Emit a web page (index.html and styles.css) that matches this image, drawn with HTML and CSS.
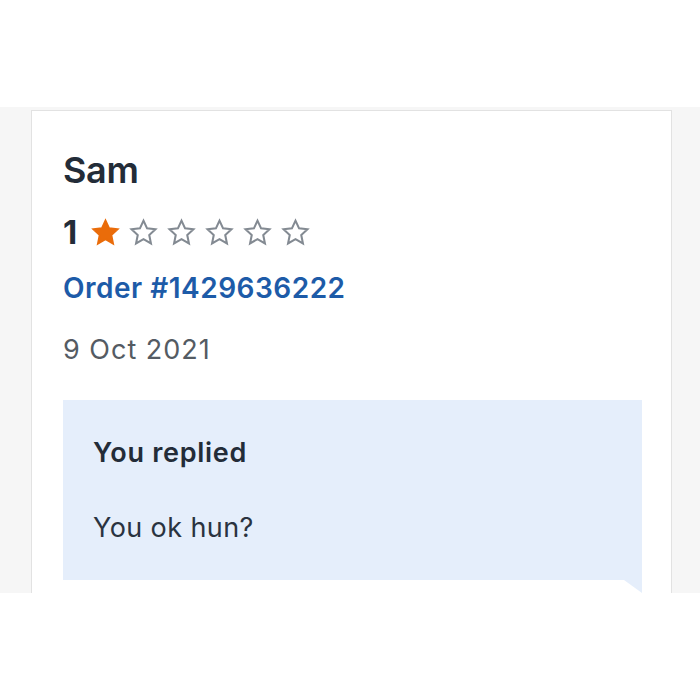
FILE: index.html
```html
<!DOCTYPE html>
<html lang="en">
<head>
<meta charset="utf-8">
<title>Review</title>
<link rel="stylesheet" href="styles.css">
</head>
<body>
<div class="top"></div>
<div class="stage">
  <div class="card">
    <div class="name">Sam</div>
    <div class="rating">
      <span class="score">1</span>
      <div class="stars">
        <svg class="star on" viewBox="0 0 24 24"><path d="M12 2.2l2.95 6.35 6.95.8-5.15 4.75 1.4 6.9L12 17.5l-6.15 3.5 1.4-6.9L2.1 9.35l6.95-.8z"/></svg>
        <svg class="star" viewBox="0 0 24 24"><path d="M12 2.2l2.95 6.35 6.95.8-5.15 4.75 1.4 6.9L12 17.5l-6.15 3.5 1.4-6.9L2.1 9.35l6.95-.8z"/></svg>
        <svg class="star" viewBox="0 0 24 24"><path d="M12 2.2l2.95 6.35 6.95.8-5.15 4.75 1.4 6.9L12 17.5l-6.15 3.5 1.4-6.9L2.1 9.35l6.95-.8z"/></svg>
        <svg class="star" viewBox="0 0 24 24"><path d="M12 2.2l2.95 6.35 6.95.8-5.15 4.75 1.4 6.9L12 17.5l-6.15 3.5 1.4-6.9L2.1 9.35l6.95-.8z"/></svg>
        <svg class="star" viewBox="0 0 24 24"><path d="M12 2.2l2.95 6.35 6.95.8-5.15 4.75 1.4 6.9L12 17.5l-6.15 3.5 1.4-6.9L2.1 9.35l6.95-.8z"/></svg>
        <svg class="star" viewBox="0 0 24 24"><path d="M12 2.2l2.95 6.35 6.95.8-5.15 4.75 1.4 6.9L12 17.5l-6.15 3.5 1.4-6.9L2.1 9.35l6.95-.8z"/></svg>
      </div>
    </div>
    <div class="order">Order #1429636222</div>
    <div class="date">9 Oct 2021</div>
    <div class="reply">
      <div class="reply-title">You replied</div>
      <div class="reply-text">You ok hun?</div>
    </div>
  </div>
</div>
</body>
</html>
```
FILE: styles.css
```css
* { box-sizing: border-box; }
html, body { margin: 0; padding: 0; background: #ffffff; }
body { font-family: Inter, "Noto Sans", sans-serif; color: #232c38; }

.top { height: 107px; background: #ffffff; }

.stage {
  height: 486px;
  background: #f6f6f6;
  padding: 3px 28px 0 31px;
  overflow: hidden;
}

.card {
  background: #ffffff;
  border: 1px solid #e2e2e2;
  border-bottom: none;
  height: 100%;
  padding: 37px 29px 0 31px;
}

.name {
  font-size: 36px;
  line-height: 44px;
  font-weight: 600;
  letter-spacing: -0.3px;
}

.rating {
  margin-top: 20px;
  height: 40px;
  display: flex;
  align-items: center;
}

.score {
  font-size: 33px;
  font-weight: 700;
  line-height: 40px;
  margin-right: 14px;
}

.stars { display: flex; gap: 9px; }

.star { width: 29px; height: 29px; display: block; }
.star path { fill: none; stroke: #838a92; stroke-width: 1.7; stroke-linejoin: miter; }
.star.on path { fill: #ea6c0a; stroke: #ea6c0a; }

.order {
  margin-top: 18px;
  font-size: 28px;
  line-height: 36px;
  font-weight: 600;
  color: #1d5ba8;
  letter-spacing: 0.5px;
}

.date {
  margin-top: 26px;
  font-size: 27px;
  line-height: 36px;
  color: #545b63;
  letter-spacing: 1px;
}

.reply {
  position: relative;
  margin-top: 32px;
  background: #e5eefb;
  padding: 35px 30px 34px 30px;
}

.reply::after {
  content: "";
  position: absolute;
  right: 0;
  bottom: -13px;
  border-top: 13px solid #e5eefb;
  border-left: 18px solid transparent;
}

.reply-title {
  font-size: 27px;
  line-height: 36px;
  font-weight: 600;
  letter-spacing: 0.7px;
}

.reply-text {
  margin-top: 39px;
  font-size: 27px;
  line-height: 36px;
  color: #2a3340;
  letter-spacing: 0.4px;
}
```
